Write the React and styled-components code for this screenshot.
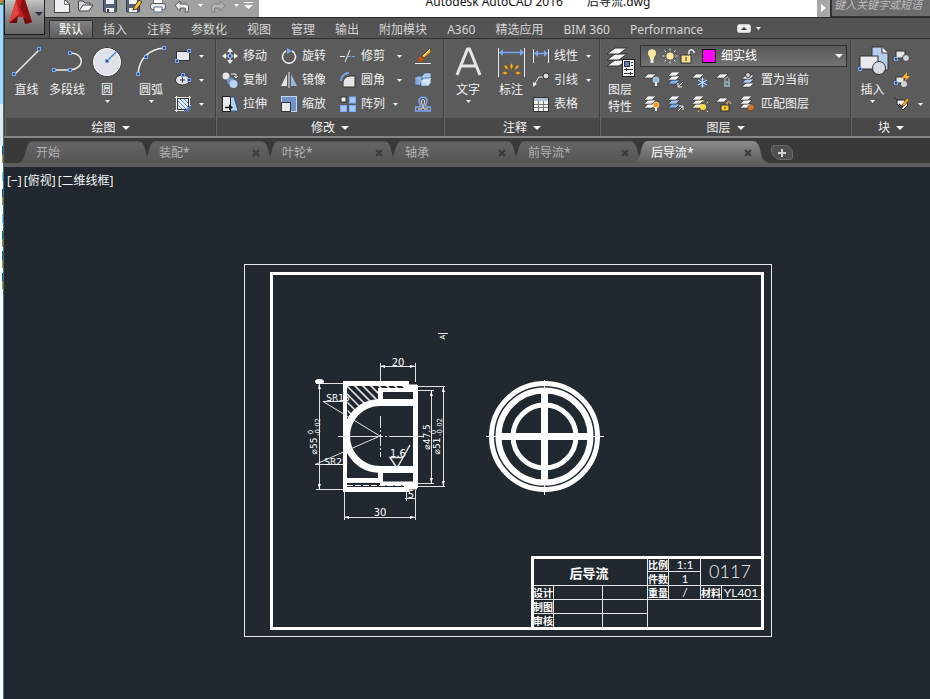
import React from "react";
import styled, { createGlobalStyle, css } from "styled-components";

const GlobalStyle = createGlobalStyle`
  *, *::before, *::after { box-sizing: border-box; }
  body {
    margin: 0;
    background: #212830;
    font: 12px/16px "Noto Sans", "Noto Sans CJK SC", sans-serif;
  }
  button, select, input { font: inherit; color: inherit; }
`;

/* ---------- layout ---------- */

const Page = styled.div`
  display: flex;
  min-height: 100vh;
  overflow: hidden;
`;

const DesktopEdge = styled.div`
  flex: none;
  width: 4px;
  border-right: 1px solid #2c7c9c;
  background:
    linear-gradient(90deg, #fff 2px, transparent 2px) 0 146px no-repeat,
    linear-gradient(
      #d08030 0 3px, #3c8a3c 3px 5px, #a9d4f5 5px 104px, #e8e8e8 104px 146px,
      #1f4f78 146px 155px, #c08a00 155px 163px, #fff 163px 172px,
      #8fbcf0 172px 181px, #fff 181px 189px,
      #1f4f78 189px 197px, #c08a00 197px 205px, #fff 205px 214px,
      #8fbcf0 214px 223px, #fff 223px 231px,
      #1f4f78 231px 239px, #c08a00 239px 247px, #fff 247px 251px,
      #1f4f78 251px 260px, #c08a00 260px 268px, #fff 268px 273px,
      #1f4f78 273px 281px, #c08a00 281px 289px, #fff 289px
    );
`;

const AppWindow = styled.div`
  position: relative;
  display: flex;
  flex: 1;
  min-width: 0;
  flex-direction: column;
`;

const TitleBar = styled.header`
  display: flex;
  height: 18px;
  padding-left: 41px;
  background: #fff;
  border-bottom: 1px solid #2a2a2a;
`;

const AppButton = styled.button`
  position: absolute;
  top: 0;
  left: 0;
  z-index: 2;
  width: 41px;
  height: 35px;
  padding: 0;
  border: 1px solid #1e1e1e;
  border-top: 0;
  background: linear-gradient(#c4c4c4, #8a8a8a 45%, #686868);
  svg { display: block; }
`;

const QuickBar = styled.div`
  display: flex;
  width: 214px;
  padding-left: 5px;
  background: #a1a1a1;
`;

const QuickButton = styled.button`
  display: flex;
  justify-content: center;
  width: ${(p) => (p.$narrow ? "12px" : "24px")};
  height: 17px;
  padding: 0;
  border: 0;
  background: none;
`;

const WindowTitle = styled.h1`
  display: flex;
  flex: 1;
  justify-content: center;
  gap: 24px;
  margin: 0;
  color: #111;
  font-size: 12px;
  font-weight: 400;
  line-height: 4px;
  white-space: nowrap;
`;

const SearchArea = styled.div`
  display: flex;
  width: 113px;
  background: #a8a8a8;
`;

const SearchToggle = styled.button`
  width: 13px;
  padding: 0 0 6px;
  border: 0;
  background: none;
`;

const SearchInput = styled.input`
  flex: 1;
  min-width: 0;
  height: 17px;
  padding: 0 0 7px 2px;
  border: solid #303030;
  border-width: 0 0 1px 2px;
  background: #6d6d6d;
  font-size: 11px;
  font-style: italic;
  &::placeholder { color: #bdbdbd; opacity: 1; }
`;

const RibbonTabs = styled.nav`
  display: flex;
  height: 20px;
  padding: 3px 0 0 46px;
  background: #535353;
`;

const RibbonTab = styled.button`
  height: 17px;
  padding: 1px 10px 0;
  border: 0;
  background: none;
  color: #d4d4d4;
  line-height: 16px;
  white-space: nowrap;
  ${(p) =>
    p.$active &&
    css`
      padding: 1px 9px 0;
      margin-right: 1px;
      background: linear-gradient(#828282, #5c5c5c);
      box-shadow: 0 -1px 0 #2f2f2f, 1px 0 0 #2f2f2f, -1px 0 0 #2f2f2f;
      color: #fff;
    `}
`;

const RibbonToggle = styled.button`
  display: flex;
  align-items: center;
  gap: 5px;
  margin-left: 24px;
  padding: 0 0 2px;
  border: 0;
  background: none;
`;

const Ribbon = styled.div`
  display: flex;
  height: 100px;
  border-top: 1px solid #2f2f2f;
  border-bottom: 2px solid #858585;
  background: #5b5b5b;
`;

const PanelBox = styled.section`
  display: flex;
  flex-direction: column;
  flex: ${(p) => (p.$width ? `none` : 1)};
  width: ${(p) => (p.$width ? `${p.$width}px` : "auto")};
  border-left: 1px solid #3f3f3f;
  box-shadow: inset 1px 0 0 #666;
`;

const PanelBody = styled.div`
  display: flex;
  height: 79px;
  padding-top: 5px;
  padding-left: ${(p) => p.$inset || 0}px;
`;

const PanelTitle = styled.button`
  display: flex;
  flex: 1;
  align-items: center;
  justify-content: center;
  gap: 6px;
  margin-left: 1px;
  padding: 1px 0 0;
  border: 0;
  background: #484848;
  color: #f2f2f2;
  line-height: 16px;
`;

const BigButton = styled.button`
  display: flex;
  flex: none;
  flex-direction: column;
  align-items: center;
  width: ${(p) => p.$width}px;
  padding: 2px 0 0;
  border: 0;
  background: none;
  color: #f0f0f0;
  line-height: 17px;
  white-space: nowrap;
  span { margin-top: 3px; }
  span + span { margin-top: 0; }
  > svg:last-child:not(:first-child) { margin-top: 2px; }
`;

const Column = styled.div`
  display: flex;
  flex-direction: column;
  flex: none;
  width: ${(p) => (p.$width ? `${p.$width}px` : "auto")};
`;

const ToolRow = styled.div`
  display: flex;
  align-items: center;
  height: 24px;
`;

const Tool = styled.button`
  display: flex;
  align-items: center;
  gap: 5px;
  height: 24px;
  padding: 0;
  border: 0;
  background: none;
  color: #f0f0f0;
  white-space: nowrap;
`;

const IconTool = styled(Tool)`
  justify-content: center;
  width: 24px;
`;

const Drop = styled.button`
  display: flex;
  align-items: center;
  justify-content: center;
  width: ${(p) => p.$width || 20}px;
  height: 24px;
  padding: 0;
  border: 0;
  background: none;
`;

const LayerCombo = styled.div`
  display: flex;
  align-items: center;
  gap: 2px;
  height: 22px;
  margin: 1px 3px 1px 0;
  padding: 0 3px;
  border: 1px solid #303030;
  background: linear-gradient(#585858, #727272);
  svg { flex: none; }
`;

const Swatch = styled.i`
  flex: none;
  width: 14px;
  height: 14px;
  margin-left: 4px;
  border: 1px solid #000;
  background: #f0f;
`;

const LayerSelect = styled.select`
  flex: 1;
  min-width: 0;
  height: 20px;
  padding: 0 0 0 3px;
  border: 0;
  appearance: none;
  background: none;
  color: #fff;
`;

const FileTabs = styled.nav`
  display: flex;
  height: 29px;
  padding: 3px 0 0 14px;
  border-bottom: 4px solid #5d5d5d;
  background: #393939;
`;

const FileTab = styled.div`
  display: flex;
  align-items: center;
  justify-content: space-between;
  flex: none;
  width: 136px;
  height: 22px;
  margin-right: -13px;
  padding: 1px 15px 0 18px;
  clip-path: path("M0 22C10 20 6 0 15 0H119C131 0 124 20 136 22Z");
  background: ${(p) =>
    p.$active ? "linear-gradient(#8c8c8c, #5d5d5d)" : "linear-gradient(#505050, #646464 2px, #545454)"};
  color: ${(p) => (p.$active ? "#fff" : "#b4b4b4")};
`;

const FileName = styled.button`
  padding: 0;
  border: 0;
  background: none;
  line-height: 20px;
`;

const CloseButton = styled.button`
  display: flex;
  padding: 2px;
  border: 0;
  background: none;
`;

const AddTab = styled.button`
  display: flex;
  align-items: center;
  justify-content: center;
  width: 22px;
  height: 15px;
  margin: 4px 0 0 15px;
  padding: 0;
  border: 1px solid #6a6a6a;
  border-radius: 3px 8px 3px 10px;
  background: #505050;
`;

const Viewport = styled.main`
  position: relative;
  display: flex;
  flex: 1;
  background: #212830;
`;

const ViewportLabels = styled.div`
  position: absolute;
  top: 6px;
  left: 3px;
  display: flex;
  gap: 2px;
`;

const ViewportLabel = styled.button`
  padding: 0;
  border: 0;
  background: none;
  color: #f4f4f4;
`;

const DrawingSvg = styled.svg`
  display: block;
  flex: 1;
  width: 100%;
  min-width: 0;
`;

/* ---------- icons ---------- */

const B = "#7aa7f5";
const W = "#ececec";

const Svg = ({ w = 16, h = 16, children }) => (
  <svg width={w} height={h} viewBox={`0 0 ${w} ${h}`} fill="none" aria-hidden="true">
    {children}
  </svg>
);

const Arrow = ({ w = 5, h = 3 }) => (
  <Svg w={w} h={h}>
    <path d={`M0 0H${w}L${w / 2} ${h}Z`} fill="#f2f2f2" />
  </Svg>
);

const Grip = ({ x, y }) => (
  <rect x={x - 1.5} y={y - 1.5} width="3" height="3" fill="#3c4d6d" stroke={B} />
);

const Sheet = ({ y = 0, x = 0, fill = "#f4f4f4" }) => (
  <path d={`M${x + 4} ${y}H${x + 12}L${x + 8} ${y + 4}H${x}Z`} fill={fill} stroke="#333" strokeWidth=".6" />
);

const Sun = ({ x, y, r = 3, fill = "#ffe9a0", ray = "#eee" }) => (
  <g>
    <path
      d={`M${x} ${y - r - 4}V${y + r + 4}M${x - r - 4} ${y}H${x + r + 4}M${x - r - 2} ${y - r - 2}L${x + r + 2} ${y + r + 2}M${x + r + 2} ${y - r - 2}L${x - r - 2} ${y + r + 2}`}
      stroke={ray}
      strokeDasharray="2 50"
    />
    <path
      d={`M${x} ${y + r + 4}V${y - r - 4}M${x + r + 4} ${y}H${x - r - 4}M${x + r + 2} ${y + r + 2}L${x - r - 2} ${y - r - 2}M${x - r - 2} ${y + r + 2}L${x + r + 2} ${y - r - 2}`}
      stroke={ray}
      strokeDasharray="2 50"
    />
    <circle cx={x} cy={y} r={r} fill={fill} />
  </g>
);

const Bulb = ({ x, y, fill }) => (
  <g>
    <circle cx={x} cy={y} r="3" fill={fill} stroke="#fff" strokeWidth=".5" />
    <path d={`M${x} ${y + 2}V${y + 6}`} stroke="#e8e8e8" strokeWidth="2" />
  </g>
);

const icons = {
  line: (
    <Svg w={32} h={32}>
      <path d="M3 29L28 4" stroke={W} strokeWidth="1.5" />
      <Grip x={3} y={28} />
      <Grip x={28} y={3} />
    </Svg>
  ),
  polyline: (
    <Svg w={32} h={32}>
      <path d="M3 24H19C34 23 34 7 19 7" stroke={W} strokeWidth="1.5" />
      <Grip x={3} y={24} />
      <Grip x={19} y={24} />
      <Grip x={19} y={7} />
    </Svg>
  ),
  circle: (
    <Svg w={32} h={32}>
      <circle cx="16" cy="16" r="14.5" fill="#dfe2e8" stroke="#333" />
      <circle cx="16" cy="16" r="13.5" stroke="#f7f7f7" />
      <path d="M16 15L26 5" stroke="#4a86dc" strokeWidth="1.5" />
      <Grip x={16} y={15} />
    </Svg>
  ),
  arc: (
    <Svg w={32} h={32}>
      <path d="M3 28C4 12 15 3 29 2" stroke={W} strokeWidth="1.5" />
      <Grip x={3} y={28} />
      <Grip x={11} y={11} />
      <Grip x={29} y={2} />
    </Svg>
  ),
  rect: (
    <Svg>
      <rect x="1.5" y="3.5" width="13" height="9" fill="#e6e8ed" stroke="#333" />
      <Grip x={2} y={13} />
      <Grip x={14} y={3} />
    </Svg>
  ),
  ellipse: (
    <Svg>
      <ellipse cx="7.5" cy="8" rx="7" ry="5" fill="#e0e2e7" stroke="#333" />
      <path d="M5 8H10M7.5 5.5V10.5" stroke="#333" />
      <Grip x={8} y={3} />
      <Grip x={14} y={8} />
    </Svg>
  ),
  hatch: (
    <Svg>
      <rect x="3" y="3" width="10" height="10" fill="#e8edf7" />
      <path d="M3 9L7 13M3 5L11 13M5 3L13 11M9 3L13 7" stroke="#5d87cc" />
      <rect x="2.5" y="2.5" width="11" height="11" stroke="#2d3238" />
      <path d="M0 1.5H16M1.5 0V16M14.500 0V10M0 14.500H9" stroke={W} />
      <path d="M9 16L16 9M11 13H16M13 11V16" stroke="#5f93f0" />
    </Svg>
  ),
  move: (
    <Svg>
      <path d="M8 0L11 4H5ZM8 16L11 12H5ZM0 8L4 5V11ZM16 8L12 5V11Z" fill={W} />
      <path d="M8 3V13M3 8H13" stroke={W} strokeDasharray="3 4 3 0" />
      <Grip x={8} y={8} />
    </Svg>
  ),
  copy: (
    <Svg>
      <circle cx="4" cy="4" r="3.5" fill="#e6e6e6" />
      <circle cx="8.5" cy="9" r="3.5" fill="#7796c4" />
      <circle cx="11.5" cy="12" r="4" fill="#b7d3f5" />
      <path d="M9 2H14V6M12 4L14 6L16 4" stroke={W} />
    </Svg>
  ),
  stretch: (
    <Svg>
      <path d="M8 1H12L16 15H8Z" fill="#b5d1f3" stroke="#315a94" />
      <rect x=".5" y=".5" width="8" height="15" fill="#e9e9e9" stroke="#222" />
      <path d="M3 11.5H8" stroke="#111" strokeWidth="1.5" />
      <path d="M7 8.500V14.500L11 11.500Z" fill="#111" />
    </Svg>
  ),
  rotate: (
    <Svg>
      <path d="M11 3A6.5 6.5 0 1 1 5 3" stroke={W} strokeWidth="1.5" />
      <path d="M6 0L11 3L6 6Z" fill={B} />
    </Svg>
  ),
  mirror: (
    <Svg>
      <path d="M6 2V14H0Z" fill="#e2e2e2" />
      <path d="M10 2V14H16Z" fill="#95b9e5" />
      <path d="M8 0V16" stroke={W} />
    </Svg>
  ),
  scale: (
    <Svg>
      <rect x=".5" y=".5" width="15" height="15" fill="#7193c7" stroke="#bdd6fa" />
      <rect x=".5" y="6.5" width="9" height="9" fill="#e7e7e7" stroke="#333" />
    </Svg>
  ),
  trim: (
    <Svg>
      <path d="M0 8.5H5M5 14L10 2" stroke={W} />
      <path d="M8 8.5H16" stroke={B} strokeDasharray="3 1" />
    </Svg>
  ),
  fillet: (
    <Svg>
      <path d="M3 15V11C3 7 6 4 11 4H15V15Z" fill="#e6e6e6" stroke="#333" />
      <path d="M1 9C1 4 5 1 9 1" stroke={B} strokeWidth="2" />
    </Svg>
  ),
  array: (
    <Svg>
      <rect x="1" y="1" width="5" height="5" fill="#f3f3f3" stroke="#333" />
      <rect x="9.5" y="1" width="6" height="6" fill="#a6c7f4" stroke={B} />
      <rect x=".5" y="9.5" width="6" height="6" fill="#a6c7f4" stroke={B} />
      <rect x="9.5" y="9.5" width="6" height="6" fill="#a6c7f4" stroke={B} />
    </Svg>
  ),
  erase: (
    <Svg>
      <path d="M0 15.5H16" stroke={W} />
      <path d="M7 8L15 0L16 4L9 10Z" fill="#f2b437" stroke="#4c3410" strokeWidth=".6" />
      <path d="M8 8L15 1" stroke="#fff0b0" />
      <path d="M6 8L9 11L7 13C5 14 3 14 3 12Z" fill="#cf4c0c" />
    </Svg>
  ),
  explode: (
    <Svg>
      <path d="M0 6L3 4H7V10L5 13H0Z" fill="#7fa9d8" stroke="#44597a" strokeWidth=".6" />
      <path d="M0 6H5V13M5 6L7 4" stroke="#c8dcf2" strokeWidth=".6" />
      <path d="M7 4L10 1H16V5L13 8H7Z" fill="#a9c9ed" stroke="#44597a" strokeWidth=".6" />
      <path d="M6 9L9 6H16V11L13 14H6Z" fill="#c5d9ef" stroke="#44597a" strokeWidth=".6" />
      <path d="M6 9H13V14M13 9L16 6" stroke="#fff" strokeWidth=".6" />
    </Svg>
  ),
  offset: (
    <Svg>
      <path d="M.5 15V11H5C6 8 4 7 4 5C4 0 12 0 12 5C12 7 10 8 11 11H15.500V15Z" stroke={B} strokeWidth="1.5" />
      <path d="M3 13H7C8 9 6 7 6.500 5C7 3 9 3 9.500 5C10 7 8 9 9 13H13" stroke={W} />
    </Svg>
  ),
  text: (
    <Svg w={32} h={32}>
      <path d="M5 29L15.500 3H17.500L28 29M9 20H24" stroke="#e5e5e5" strokeWidth="3" />
    </Svg>
  ),
  dimension: (
    <Svg w={32} h={32}>
      <path d="M3.5 2V31M29.5 2V31" stroke={W} />
      <path d="M5 6.5H28" stroke={B} strokeWidth="1.5" />
      <path d="M4 6.5L8 3V10ZM29 6.5L25 3V10Z" fill={B} />
      <g fill="#ffb92b" stroke="#a45a08" strokeWidth=".5">
        <path d="M16.500 17L18 20L16.500 24L15 20ZM9 19L12 20L13.500 24L10 22ZM24 19L21 20L19.500 24L23 22ZM7 27L10 25.500L13 27L10 28.500ZM26 27L23 25.500L20 27L23 28.500Z" />
      </g>
    </Svg>
  ),
  linear: (
    <Svg>
      <path d="M.5 1V15M15.5 1V15" stroke={W} />
      <path d="M2 5.5H14" stroke={B} strokeWidth="1.5" />
      <path d="M1 5.5L5 2V9ZM15 5.5L11 2V9Z" fill={B} />
    </Svg>
  ),
  leader: (
    <Svg>
      <path d="M1 13L6 5H11" stroke={W} />
      <path d="M0 15V10L4 12Z" fill={W} />
      <circle cx="13" cy="4" r="3" fill="#ddd" stroke="#333" />
    </Svg>
  ),
  table: (
    <Svg>
      <rect x=".5" y="1.5" width="15" height="14" fill="#f1f1f1" stroke="#333" />
      <path d="M1 3.5H15" stroke="#aebfd7" strokeWidth="3" />
      <path d="M1 8.5H15M1 11.5H15M5.5 5V15M10.5 5V15" stroke="#777" />
    </Svg>
  ),
  layers: (
    <Svg w={32} h={32}>
      {[14, 8, 2].map((y) => (
        <path key={y} d={`M11 ${y}H23L15 ${y + 6}H3Z`} fill="#f4f4f4" stroke="#333" />
      ))}
      <rect x="18.5" y="13.5" width="12" height="17" fill="#f1f1f1" stroke="#222" />
      <rect x="20.500" y="15.500" width="5" height="5" fill="#5b84c4" stroke="#333" />
      <path d="M27 16.500H29M27 19.500H29M20 23.500H29M20 27.500H29M22.500 22V25M26.500 26V29" stroke="#333" />
    </Svg>
  ),
  bulb: (
    <Svg>
      <path d="M4 5C4 0 12 0 12 5C12 8 10 8 10 11H6C6 8 4 8 4 5Z" fill="#ffe9a0" />
      <path d="M8 11V15" stroke="#eee" strokeWidth="3" />
    </Svg>
  ),
  sun: (
    <Svg>
      <Sun x={8} y={8} r={3.5} />
    </Svg>
  ),
  unlock: (
    <Svg>
      <path d="M9 7V4C9 1 14 1 14 5" stroke={W} strokeWidth="1.5" />
      <rect x="1" y="7" width="10" height="8" fill="#ffe28c" stroke="#333" />
      <path d="M6 9V13" stroke="#333" />
    </Svg>
  ),
  layerOff: (
    <Svg>
      <Sheet y={2} />
      <Bulb x={12} y={8} fill="#8ab9ee" />
    </Svg>
  ),
  layerOn: (
    <Svg>
      <Sheet y={8} />
      <Sheet y={4} />
      <Sheet y={0} />
      <Bulb x={12} y={9} fill="#ff9c1c" />
    </Svg>
  ),
  isolate: (
    <Svg>
      <Sheet y={8} fill="#7fb0ef" />
      <Sheet y={4} />
      <Sheet y={0} />
      <path d="M15 10L10 15M10 11V15H14" stroke={W} />
    </Svg>
  ),
  unisolate: (
    <Svg>
      <Sheet y={8} fill="#7fb0ef" />
      <Sheet y={4} fill="#a7c9f5" />
      <Sheet y={0} />
      <path d="M10 15L15 10M11 10H15V14" stroke={W} />
    </Svg>
  ),
  freeze: (
    <Svg>
      <Sheet y={2} />
      <circle cx="10.5" cy="10.5" r="4" fill="#44699c" />
      <path
        d="M10.5 5.500V15.500M6 8L15 13M15 8L6 13M9 6.500L10.500 8L12 6.500M9 14.500L10.500 13L12 14.500"
        stroke="#d5e8ff"
      />
    </Svg>
  ),
  thaw: (
    <Svg>
      <Sheet y={8} />
      <Sheet y={4} />
      <Sheet y={0} />
      <Sun x={11} y={11} r={3} fill="#ffdc3e" ray="#ffdc3e" />
    </Svg>
  ),
  lock: (
    <Svg>
      <Sheet y={2} />
      <path d="M9 10V7C9 5 13 5 13 7V10" stroke="#b3c6c6" />
      <rect x="8" y="9" width="6" height="6" fill="#8ca9a9" />
      <path d="M11 11V13" stroke="#333" />
    </Svg>
  ),
  unlockLayer: (
    <Svg>
      <Sheet y={2} />
      <path d="M11 10V7C11 5 15 5 15 8" stroke="#ffd15a" />
      <rect x="5" y="9" width="8" height="6" fill="#ffc62f" stroke="#333" />
      <path d="M9 11V13" stroke="#333" />
    </Svg>
  ),
  current: (
    <Svg>
      <Sheet x={2} y={11} />
      <Sheet x={2} y={7} fill="#a9ccf4" />
      <Sheet x={2} y={3} />
      <circle cx="8" cy="3" r="2.5" fill="#d5d5d5" stroke="#333" />
    </Svg>
  ),
  match: (
    <Svg>
      <Sheet y={8} />
      <Sheet y={4} />
      <Sheet y={0} />
      <path d="M8 10L12 8L15 11L12 15L7 14Z" fill="#c57835" stroke="#5c3010" strokeWidth=".6" />
    </Svg>
  ),
  insert: (
    <Svg w={32} h={32}>
      <path d="M15 1H25L31 7V24H15Z" fill="#b3cfed" stroke="#333" />
      <path d="M25 1V7H31" fill="#fff" stroke="#333" />
      <rect x="3" y="10" width="18" height="13" fill="#e9eaef" stroke="#333" />
      <circle cx="22" cy="22" r="6.5" fill="#d6dae2" stroke="#333" />
      <Grip x={3} y={23} />
    </Svg>
  ),
  block: (
    <Svg>
      <rect x="2" y="3" width="9" height="7" fill="#e6e6e6" stroke="#333" />
      <circle cx="12" cy="10" r="3.5" fill="#ced2d9" stroke="#444" />
      <Grip x={2} y={11} />
    </Svg>
  ),
  blockEdit: (
    <Svg>
      <rect x="2" y="5" width="8" height="6" fill="#e6e6e6" stroke="#333" />
      <circle cx="10" cy="12" r="3" fill="#ced2d9" />
      <path d="M13 0L8 6H12L10 10L16 4H13Z" fill="#ffae22" />
      <Grip x={2} y={11} />
    </Svg>
  ),
  attribute: (
    <Svg>
      <path d="M0 1.500L4 4.500" stroke="#222" strokeDasharray="2 1" />
      <path d="M3 4H11L14 9L9 14L3 8Z" fill="#f0f0f0" stroke="#222" />
      <path d="M5 8L8 11L11 7" stroke="#222" strokeWidth="1.500" />
      <path d="M8 9L13 2L15 4L10 10Z" fill="#f4aa28" stroke="#593a12" strokeWidth=".6" />
    </Svg>
  ),
};

const quickIcons = {
  新建: (
    <Svg w={18} h={14}>
      <path d="M1.5 0V12.5H16.5V4L12 0" fill="#eef0f4" stroke="#444" />
      <path d="M11.5 0V4.5H16" stroke="#777" />
    </Svg>
  ),
  打开: (
    <Svg w={18} h={14}>
      <path d="M1.5 10V1H6L8 3H13V6" fill="#d8dce3" stroke="#444" />
      <path d="M2 11L6 5H16L12 11Z" fill="#eef1f5" stroke="#444" />
    </Svg>
  ),
  保存: (
    <Svg w={16} h={14}>
      <rect x="1.5" y="-2" width="13" height="14" rx="1" fill="#556279" stroke="#333b4a" />
      <path d="M4 0H12V4H4ZM4 8H12V12H4Z" fill="#eef0f4" />
      <path d="M6 9V12" stroke="#333" strokeWidth="2" />
    </Svg>
  ),
  另存为: (
    <Svg w={18} h={14}>
      <rect x="1.5" y="-2" width="13" height="14" rx="1" fill="#556279" stroke="#333b4a" />
      <path d="M4 0H12V4H4ZM4 8H12V12H4Z" fill="#eef0f4" />
      <path d="M9 7L14 0L17 2L12 9L8 10Z" fill="#f4c03c" stroke="#503a15" />
    </Svg>
  ),
  打印: (
    <Svg w={18} h={14}>
      <rect x="4.5" y="-2" width="9" height="6" fill="#fff" stroke="#777" />
      <rect x="1.5" y="3.5" width="15" height="6" rx="2" fill="#e5e7eb" stroke="#555" />
      <path d="M5 7H13V12H5Z" fill="#fff" stroke="#52709a" />
    </Svg>
  ),
  放弃: (
    <Svg w={18} h={14}>
      <path d="M2 5.5L7 1V4H12C16 4 16 8 15 12H12C13 9 13 8 11 8H7V11Z" fill="#f0f1f4" stroke="#555" />
    </Svg>
  ),
};

const quickItems = ["新建", "打开", "保存", "另存为", "打印", "放弃"];

const AppLogo = () => (
  <svg width="40" height="34" viewBox="0 0 40 34" aria-hidden="true">
    <path d="M11 0H20L27 22L20 20L18 17H13L9 20L4 23Z" fill="#c21f1f" />
    <path d="M11 0L4 23L14 14Z" fill="#e04440" />
    <path d="M17 0H20L27 22L22 24L15 7Z" fill="#891010" />
    <path d="M4 23L13 16L12 23ZM27 22L18 17L20 24Z" fill="#6d0c0c" />
    <path d="M30 12H38L34 16Z" fill="#2c3340" />
  </svg>
);

/* ---------- parts ---------- */

const Big = ({ icon, label, width, drop }) => (
  <BigButton $width={width}>
    {icons[icon]}
    {label.map((part) => (
      <span key={part}>{part}</span>
    ))}
    {drop && <Arrow />}
  </BigButton>
);

const Panel = ({ title, width, inset, children }) => (
  <PanelBox $width={width} aria-label={title}>
    <PanelBody $inset={inset}>{children}</PanelBody>
    <PanelTitle>
      {title}
      <Arrow w={8} h={4} />
    </PanelTitle>
  </PanelBox>
);

const ToolColumn = ({ items, width }) => (
  <Column $width={width}>
    {items.map(([icon, label, drop]) => (
      <ToolRow key={icon}>
        <Tool aria-label={label || icon}>
          {icons[icon]}
          {label}
        </Tool>
        {drop && (
          <Drop $width={drop} aria-label={`${label || icon} 选项`}>
            <Arrow />
          </Drop>
        )}
      </ToolRow>
    ))}
  </Column>
);

const TightLabel = styled.span`
  margin-left: -4px;
`;

const IconRow = ({ names, icon, label }) => (
  <ToolRow>
    {names.map((name) => (
      <IconTool key={name} aria-label={name}>
        {icons[name]}
      </IconTool>
    ))}
    <Tool>
      <IconTool as="span">{icons[icon]}</IconTool>
      <TightLabel>{label}</TightLabel>
    </Tool>
  </ToolRow>
);

const ribbonTabs = [
  "默认", "插入", "注释", "参数化", "视图", "管理", "输出",
  "附加模块", "A360", "精选应用", "BIM 360", "Performance",
];

const fileTabs = ["开始", "装配*", "叶轮*", "轴承", "前导流*", "后导流*"];

/* ---------- drawing ---------- */

const DimText = styled.text`
  fill: #fff;
  font-family: "DejaVu Sans", sans-serif;
  font-size: ${(p) => p.$size || 10}px;
  text-anchor: middle;
`;

const BlockText = styled.text`
  fill: #fff;
  font-family: "Noto Sans CJK SC", sans-serif;
  font-size: ${(p) => p.$size || 10}px;
  font-weight: 700;
  text-anchor: middle;
`;

const ThinText = styled.text`
  fill: #f4f4f4;
  font-family: Lato, sans-serif;
  font-size: ${(p) => p.$size || 12}px;
  font-weight: ${(p) => (p.$size ? 300 : 400)};
  text-anchor: middle;
`;

const Vertical = ({ x, y, size, children }) => (
  <DimText $size={size} transform={`translate(${x} ${y}) rotate(-90)`}>
    {children}
  </DimText>
);

const Drawing = () => (
  <DrawingSvg viewBox="4 167 926 532" fill="none" stroke="none" role="img" aria-label="后导流">
    <g stroke="#e4e6e8">
      <rect x="244.5" y="264.5" width="527" height="372" />
      <path d="M648 571.5H701M533 585.5H762M533 599.5H762M533 613.5H648" />
      <path d="M553.5 586V628M602.5 586V628M647.5 558V628M668.5 558V600M700.5 558V600M721.5 586V600" />
    </g>
    <g stroke="#fff" strokeWidth="3">
      <rect x="271.5" y="273.5" width="491" height="355" />
      <path d="M532.5 628V557.5H762" />
    </g>

    <g stroke="#fff" strokeWidth="5">
      <circle cx="544.5" cy="436.5" r="53" />
      <circle cx="544.5" cy="436.5" r="46" strokeWidth="6" />
      <circle cx="544.5" cy="436.5" r="31.5" />
      <path d="M544.5 388V485M497 436.5H592" strokeWidth="7" />
    </g>
    <path d="M486 436.5H604M544.5 380V495" stroke="#fff" />

    <clipPath id="hatch-area">
      <path d="M347 386H410V389H378V404C362 405 350 416 348 424Z" />
    </clipPath>
    <g clipPath="url(#hatch-area)" stroke="#f4f4f4" strokeWidth="1.5">
      {[-5, -4, -3, -2, -1, 0, 1, 2, 3, 4, 5, 6, 7].map((n) => (
        <path key={n} d={`M${345 + n * 8} 384l40 40`} />
      ))}
    </g>
    <g stroke="#fff">
      <path d="M345 382V491" strokeWidth="4" />
      <path d="M343 383.5H409" strokeWidth="5" />
      <path d="M404 386.5H417" strokeWidth="4" />
      <path d="M415.5 385V488" strokeWidth="5" />
      <path d="M343 489.5H409M404 487H417" strokeWidth="5" />
      <path d="M380.5 390V404M380.5 469V483" strokeWidth="5" />
      <path d="M378 390H415M380 483.5H415" strokeWidth="4" />
      <path d="M345 480.5H382" strokeWidth="5" />
      <path d="M415 402.5H380A33.500 33.500 0 0 0 380 469.500H415" strokeWidth="7" />
    </g>
    <path d="M347 485.5H404" stroke="#fff" strokeDasharray="6 2" />
    <g stroke="#e0e2e4">
      <path d="M338 436.5H378M389 436.5H424" />
      <path d="M381 436.5H388" strokeDasharray="2 2" />
      <path d="M380.5 416V457" strokeDasharray="12 2 2 2" />
      <path d="M345 401.5H323L380 436L315 464.5H343" />
      <path d="M316 383.5H343M316 489.5H343M319.5 383V490" />
      <path d="M380.5 382V363M415.5 382V363M380 366.5H416" />
      <path d="M344.5 492V520M415.5 490V520M344 517.5H416" />
      <path d="M418 390.5H434M418 483.5H434M431.5 390V484" />
      <path d="M418 386.5H445M418 486.5H445M443.5 386V487" />
      <path d="M406.5 490V501M405 498.5H416" />
      <path d="M403 457.5H390L397 468L410 445" strokeWidth="1.5" />
      <path d="M438 333.5H448" />
    </g>
    <ellipse cx="319.5" cy="381.5" rx="4.5" ry="2.5" fill="#fff" />
    <path
      fill="#fff"
      d="M319 384l-1 5h3zM319 489l-1-5h3zM380 366l5-1v3zM415 366l-5-1v3zM344 517l5-1v3zM415 517l-5-1v3zM431 391l-1 5h3zM431 483l-1-5h3zM443 387l-1 5h3zM443 486l-1-5h3z"
    />
    <DimText x="398" y="366">20</DimText>
    <DimText x="380" y="516">30</DimText>
    <DimText x="411" y="498">5</DimText>
    <DimText x="398" y="457">1.6</DimText>
    <DimText x="338" y="401" $size={9}>SR13</DimText>
    <DimText x="336" y="465" $size={9}>SR25</DimText>
    <Vertical x={317} y={446} size={9}>⌀55</Vertical>
    <Vertical x={313} y={432} size={7}>0</Vertical>
    <Vertical x={320} y={427} size={7}>-0.02</Vertical>
    <Vertical x={430} y={437} size={9}>⌀47.5</Vertical>
    <Vertical x={440} y={446} size={9}>⌀51</Vertical>
    <Vertical x={436} y={432} size={7}>0</Vertical>
    <Vertical x={442} y={427} size={7}>-0.02</Vertical>
    <Vertical x={445} y={337} size={7}>A</Vertical>

    <BlockText x="589" y="578" $size={13}>后导流</BlockText>
    <BlockText x="543" y="597">设计</BlockText>
    <BlockText x="543" y="611">制图</BlockText>
    <BlockText x="543" y="625">审核</BlockText>
    <BlockText x="658" y="569">比例</BlockText>
    <BlockText x="658" y="583">件数</BlockText>
    <BlockText x="658" y="597">重量</BlockText>
    <BlockText x="711" y="597">材料</BlockText>
    <ThinText x="685" y="569">1:1</ThinText>
    <ThinText x="685" y="583">1</ThinText>
    <ThinText x="685" y="597">/</ThinText>
    <ThinText x="741" y="597">YL401</ThinText>
    <ThinText x="730" y="578" $size={18}>0117</ThinText>
  </DrawingSvg>
);

/* ---------- app ---------- */

export default function App() {
  return (
    <Page>
      <GlobalStyle />
      <DesktopEdge />
      <AppWindow>
        <AppButton aria-label="应用程序菜单">
          <AppLogo />
        </AppButton>
        <TitleBar>
          <QuickBar>
            {quickItems.map((name) => (
              <QuickButton key={name} aria-label={name}>
                {quickIcons[name]}
              </QuickButton>
            ))}
            <QuickButton $narrow aria-label="放弃选项">
              <Svg w={7} h={8}>
                <path d="M1 4H6L3.5 7Z" fill="#fff" />
              </Svg>
            </QuickButton>
            <QuickButton aria-label="重做">
              <Svg w={18} h={14}>
                <path
                  d="M16 5.5L11 1V4H6C2 4 2 8 3 12H6C5 9 5 8 7 8H11V11Z"
                  fill="#b2b2b2"
                  stroke="#808080"
                />
              </Svg>
            </QuickButton>
            <QuickButton $narrow aria-label="重做选项">
              <Svg w={7} h={8}>
                <path d="M1 4H6L3.5 7Z" fill="#fff" />
              </Svg>
            </QuickButton>
            <QuickButton $narrow aria-label="自定义快速访问工具栏">
              <Svg w={9} h={10}>
                <path d="M0 2.5H9" stroke="#fff" />
                <path d="M0 5H9L4.5 9Z" fill="#fff" />
              </Svg>
            </QuickButton>
          </QuickBar>
          <WindowTitle>
            <span>Autodesk AutoCAD 2016</span>
            <span>后导流.dwg</span>
          </WindowTitle>
          <SearchArea>
            <SearchToggle aria-label="展开搜索">
              <Svg w={5} h={8}>
                <path d="M0 0L5 4L0 8Z" fill="#fff" />
              </Svg>
            </SearchToggle>
            <SearchInput aria-label="搜索" placeholder="键入关键字或短语" />
          </SearchArea>
        </TitleBar>

        <RibbonTabs>
          {ribbonTabs.map((name, i) => (
            <RibbonTab key={name} $active={i === 0}>
              {name}
            </RibbonTab>
          ))}
          <RibbonToggle aria-label="最小化功能区">
            <Svg w={14} h={9}>
              <rect x=".5" y=".5" width="13" height="8" rx="2" fill="#ececec" stroke="#ccc" />
              <path d="M4 6H10L7 3Z" fill="#333" />
            </Svg>
            <Arrow />
          </RibbonToggle>
        </RibbonTabs>

        <Ribbon>
          <Panel title="绘图" width={211} inset={1}>
            <Big icon="line" label={["直线"]} width={41} />
            <Big icon="polyline" label={["多段线"]} width={40} />
            <Big icon="circle" label={["圆"]} width={40} drop />
            <Big icon="arc" label={["圆弧"]} width={48} drop />
            <ToolColumn items={[["rect", "", 20], ["ellipse", "", 20], ["hatch", "", 20]]} />
          </Panel>
          <Panel title="修改" width={228} inset={6}>
            <ToolColumn width={59} items={[["move", "移动"], ["copy", "复制"], ["stretch", "拉伸"]]} />
            <ToolColumn width={59} items={[["rotate", "旋转"], ["mirror", "镜像"], ["scale", "缩放"]]} />
            <ToolColumn
              width={75}
              items={[["trim", "修剪", 28], ["fillet", "圆角", 28], ["array", "阵列", 20]]}
            />
            <ToolColumn items={[["erase"], ["explode"], ["offset"]]} />
          </Panel>
          <Panel title="注释" width={156} inset={3}>
            <Big icon="text" label={["文字"]} width={42} drop />
            <Big icon="dimension" label={["标注"]} width={44} />
            <ToolColumn items={[["linear", "线性", 20], ["leader", "引线", 20], ["table", "表格"]]} />
          </Panel>
          <Panel title="图层" width={251}>
            <Big icon="layers" label={["图层", "特性"]} width={40} />
            <Column $width={210}>
              <LayerCombo>
                {icons.bulb}
                {icons.sun}
                {icons.unlock}
                <Swatch />
                <LayerSelect aria-label="图层" defaultValue="细实线">
                  <option>细实线</option>
                </LayerSelect>
                <Arrow w={8} h={4} />
              </LayerCombo>
              <IconRow names={["layerOff", "isolate", "freeze", "lock"]} icon="current" label="置为当前" />
              <IconRow names={["layerOn", "unisolate", "thaw", "unlockLayer"]} icon="match" label="匹配图层" />
            </Column>
          </Panel>
          <Panel title="块">
            <Big icon="insert" label={["插入"]} width={43} drop />
            <ToolColumn items={[["block"], ["blockEdit"], ["attribute", "", 20]]} />
          </Panel>
        </Ribbon>

        <FileTabs>
          {fileTabs.map((name, i) => (
            <FileTab key={name} $active={i === fileTabs.length - 1}>
              <FileName>{name}</FileName>
              {i > 0 && (
                <CloseButton aria-label={`关闭 ${name}`}>
                  <Svg w={8} h={8}>
                    <path d="M1 1L7 7M7 1L1 7" stroke="#3a3a3a" strokeWidth="2" />
                  </Svg>
                </CloseButton>
              )}
            </FileTab>
          ))}
          <AddTab aria-label="新图形">
            <Svg w={8} h={8}>
              <path d="M4 0V8M0 4H8" stroke="#d0d0d0" strokeWidth="2" />
            </Svg>
          </AddTab>
        </FileTabs>

        <Viewport>
          <Drawing />
          <ViewportLabels>
            <ViewportLabel>[−]</ViewportLabel>
            <ViewportLabel>[俯视]</ViewportLabel>
            <ViewportLabel>[二维线框]</ViewportLabel>
          </ViewportLabels>
        </Viewport>
      </AppWindow>
    </Page>
  );
}
